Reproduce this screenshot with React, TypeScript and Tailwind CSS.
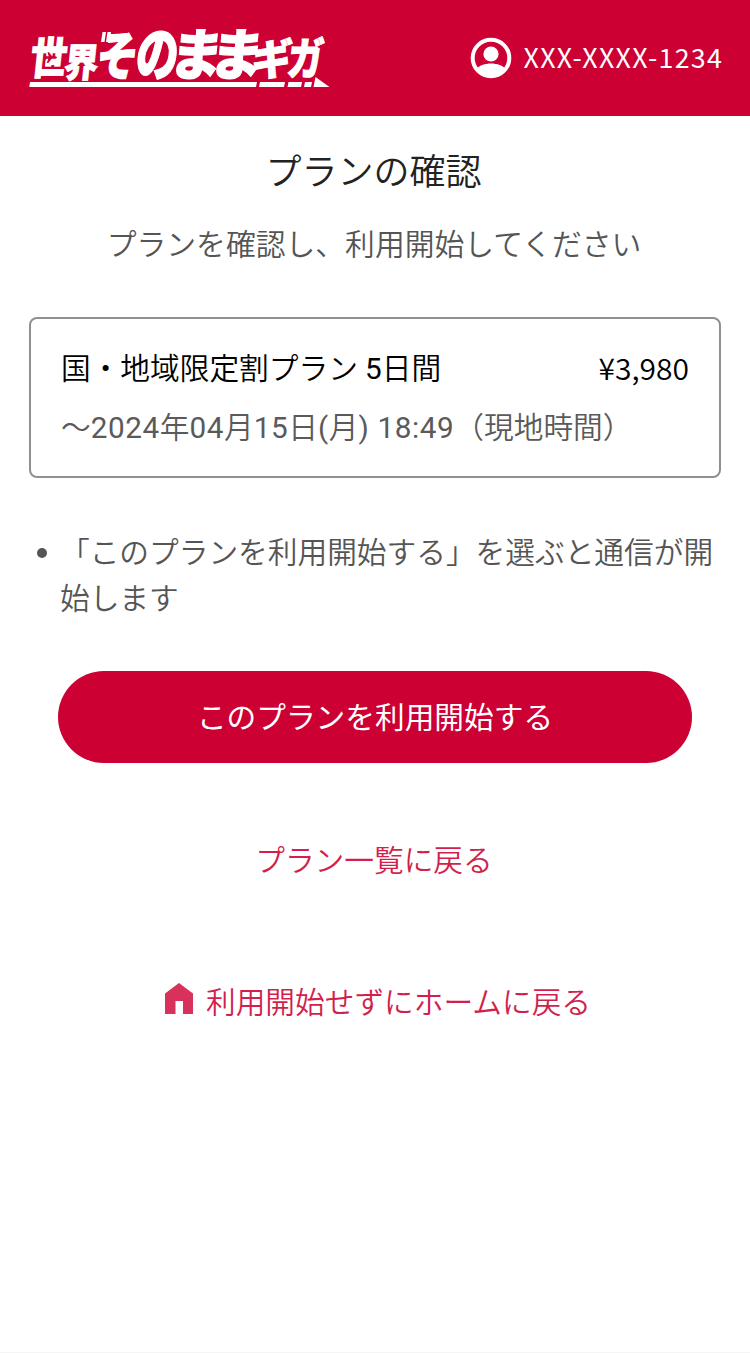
import type { ReactNode } from 'react'

interface LogoGlyph {
  char: string
  x: number
  y: number
  sx: number
  sy: number
}

// Each character of the wordmark has its own size and baseline
const logoGlyphs: LogoGlyph[] = [
  { char: '世', x: 29, y: 74, sx: 0.96, sy: 1.16 },
  { char: '界', x: 63, y: 76.5, sx: 0.9, sy: 1.04 },
  { char: 'そ', x: 95, y: 75, sx: 1.1, sy: 1.38 },
  { char: 'の', x: 134, y: 75.5, sx: 1.12, sy: 1.56 },
  { char: 'ま', x: 168, y: 75, sx: 1.4, sy: 1.46 },
  { char: 'ま', x: 208, y: 75, sx: 1.42, sy: 1.46 },
  { char: 'ギ', x: 250, y: 74.5, sx: 1.06, sy: 1.13 },
  { char: 'ガ', x: 286, y: 74.5, sx: 0.94, sy: 1.18 },
]

const dateParts = ['～', '2024', '年', '04', '月', '15', '日', '(', '月', ') 18:49', '（現地時間）']

function Logo() {
  return (
    <svg width="340" height="116" viewBox="0 0 340 116" fill="#fff" role="img" aria-label="世界そのままギガ">
      {logoGlyphs.map((g, i) => (
        <text
          key={i}
          className="font-['Noto_Sans_CJK_JP',sans-serif] text-[38px] font-black"
          stroke="#fff"
          strokeWidth="0.8"
          transform={`translate(${g.x} ${g.y}) skewX(-6) scale(${g.sx} ${g.sy})`}
        >
          {g.char}
        </text>
      ))}
      <path d="M102.500 32h3.500l-1.500 10h-3.500zM107.500 32h3.500l-1.500 10h-3.500z" />
      <path d="M30 82h227l-1 5H29.300zM260 82h25l-1 5h-25zM288.500 82h13.500l-1 5h-13.500zM305 82h7l-1 5h-7zM315.500 77l14 10h-16z" />
      {/* Plane */}
      <path
        fill="#cc0033"
        d="M57 57.500c0-1-1.500-1.300-3-1.300h-2l-3-4h-1.500l1.200 4h-2.200l-1.300-1.700h-1.200l.6 3-.9 3h1.200l1.500-1.800h2l-1.700 4.300h1.500l3.500-4.300h2.300c1.500 0 3-.3 3-1.200z"
      />
    </svg>
  )
}

function AccountIcon() {
  return (
    <svg width="42" height="42" viewBox="0 0 42 42">
      <circle cx="21" cy="21" r="18.300" fill="none" stroke="#fff" strokeWidth="4" />
      <circle cx="21" cy="17" r="7.600" fill="#fff" />
      <path d="M5.500 32.500C9 28.500 15 26.500 21 26.500s12 2 15.500 6A19.500 19.500 0 0 1 5.500 32.500z" fill="#fff" />
    </svg>
  )
}

function HomeIcon() {
  return (
    <svg className="mb-[8px]" width="28" height="32" viewBox="0 0 28 32" fill="#d8315b">
      <path d="M14 0L28 10.500V31H18V18H10.500V31H0V10.500z" />
    </svg>
  )
}

function LinkButton({ children, className = '' }: { children: ReactNode; className?: string }) {
  return (
    <button className={`flex items-center justify-center text-[29.700px] leading-[44px] text-[#d21f4d] ${className}`}>
      {children}
    </button>
  )
}

export default function App() {
  return (
    <div className="flex h-[1353px] w-[750px] flex-col overflow-hidden border-b border-[#f5f5f5] bg-white font-['Roboto','Noto_Sans_CJK_JP',sans-serif] font-[350]">
      <header className="flex h-[116px] shrink-0 items-center justify-between bg-[#cc0033] pr-[27px]">
        <Logo />
        <div className="flex items-center gap-[12px]">
          <AccountIcon />
          <span className="pb-[2px] font-['Noto_Sans_CJK_JP',sans-serif] text-[26.800px] leading-[40px] font-normal tracking-[1.250px] text-white">
            XXX-XXXX-1234
          </span>
        </div>
      </header>

      <main className="flex flex-col px-[29px]">
        <h1 className="mt-[30px] mr-[3px] text-center text-[36px] leading-[54px] text-[#222]">プランの確認</h1>
        <p className="mt-[22px] mr-[2px] text-center text-[29.800px] leading-[46px] text-[#555]">
          プランを確認し、利用開始してください
        </p>

        {/* Plan card */}
        <section className="mt-[49px] flex h-[161px] flex-col rounded-lg border-2 border-[#909090] px-[30px] pt-[27px]">
          <div className="flex items-center justify-between leading-[46px] text-black">
            <h2 className="text-[29.700px]">
              国・地域限定割プラン <span className="font-normal">5</span>日間
            </h2>
            <span className="pb-[4px] font-['Noto_Sans_CJK_JP',sans-serif] text-[30px] leading-[42px]">¥3,980</span>
          </div>
          <p className="mt-[13px] text-[29.700px] leading-[46px] whitespace-nowrap text-[#5a5a5a]">
            {dateParts.map((part, i) => (
              <span key={i} className={/[\d(]/.test(part) ? 'font-normal tracking-[0.600px]' : ''}>
                {part}
              </span>
            ))}
          </p>
        </section>

        <ul className="mt-[52px] -mr-[8px] text-[29.700px] leading-[46px] text-[#555]">
          <li className="flex gap-[14px] pl-[8px]">
            <span className="mt-[18px] size-[10px] shrink-0 rounded-full bg-[#555]" />
            <span className="-ml-px">「このプランを利用開始する」を選ぶと通信が開始します</span>
          </li>
        </ul>

        <button className="mx-[29px] mt-[49px] h-[92px] rounded-full bg-[#cc0033] pt-[2px] text-[29.700px] font-normal text-white">
          このプランを利用開始する
        </button>

        <LinkButton className="mt-[76px] mr-[2px]">プラン一覧に戻る</LinkButton>
        <LinkButton className="mt-[98px] gap-[13px] pl-[6px]">
          <HomeIcon />
          利用開始せずにホームに戻る
        </LinkButton>
      </main>
    </div>
  )
}
